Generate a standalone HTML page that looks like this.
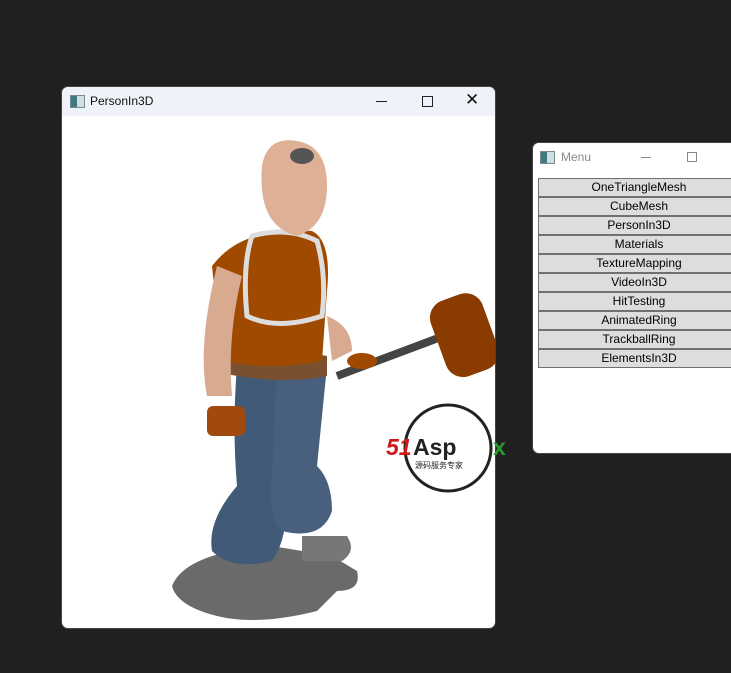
<!DOCTYPE html>
<html><head><style>
body{margin:0;width:731px;height:673px;background:#202020;position:relative;overflow:hidden;font-family:"Segoe UI","Liberation Sans","Noto Sans CJK SC",sans-serif}
.win{position:absolute;background:#fff;border-radius:7px;overflow:hidden;border:1px solid #444}
.tb{height:29px;background:#eff2f8;position:relative;font-size:12px;color:#111}
.ic{position:absolute;left:8px;top:8px;width:13px;height:11px;border:1px solid #7a8a90;background:linear-gradient(90deg,#3c7a80 0 45%,#cfe0e0 45%)}
.btn{position:absolute;left:5px;width:200px;height:17px;background:#ddd;border:1px solid #707070;font-size:12px;text-align:center;line-height:17px;color:#000}
</style></head><body>
<div class="win" style="left:61px;top:86px;width:433px;height:541px">
<div class="tb"><div class="ic"></div><span style="position:absolute;left:28px;top:7px">PersonIn3D</span>
<span style="position:absolute;left:314px;top:14px;width:11px;border-top:1px solid #222"></span>
<span style="position:absolute;left:360px;top:9px;width:9px;height:9px;border:1px solid #222"></span>
<span style="position:absolute;left:403px;top:3px;font-size:17px">✕</span></div>
<svg width="433" height="512" style="position:absolute;left:0;top:29px">
<path d="M110 470 q10 -25 60 -35 l40 -5 l60 10 l25 15 q5 20 -20 20 l-20 20 q-60 15 -100 5 q-40 -10 -45 -30z" fill="#6a6a6a"/>
<path d="M240 420 l45 0 q10 15 -5 25 l-40 0z" fill="#777"/>
<path d="M175 250 q-5 60 0 120 q-30 35 -25 65 q20 20 60 10 q20 -30 10 -70 l5 -120z" fill="#405a78"/>
<path d="M215 250 l-5 110 q-5 40 10 55 q40 10 50 -20 q0 -30 -15 -45 l10 -100z" fill="#48607e"/>
<path d="M150 240 q40 -15 115 0 l0 20 q-50 10 -115 -5z" fill="#7a5030"/>
<path d="M150 150 q30 -40 100 -35 q20 10 15 60 l-5 70 q-50 10 -100 0 z" fill="#a04a00"/>
<path d="M190 120 q-10 30 -5 80 q30 15 75 0 q5 -40 -5 -75 q-30 -15 -65 -5z" fill="none" stroke="#ddd" stroke-width="5"/>
<path d="M155 150 q-20 80 -10 130 l25 0 q-5 -60 10 -120z" fill="#d8aa90"/>
<path d="M265 200 q25 10 25 35 l-20 10z" fill="#d8aa90"/>
<rect x="145" y="290" width="38" height="30" rx="6" fill="#a04a10"/>
<path d="M200 50 q5 -30 35 -25 q30 5 30 45 q0 40 -30 50 q-40 -10 -35 -70z" fill="#deb096"/>
<ellipse cx="240" cy="40" rx="12" ry="8" fill="#555"/>
<path d="M275 260 l120 -45" stroke="#444" stroke-width="8"/>
<rect x="375" y="180" width="55" height="80" rx="18" fill="#8a3c00" transform="rotate(-20 400 220)"/>
<ellipse cx="300" cy="245" rx="15" ry="8" fill="#a04a00"/>
</svg></div>
<svg width="140" height="100" style="position:absolute;left:380px;top:400px">
<circle cx="68" cy="48" r="43" fill="#fff" stroke="#222" stroke-width="3"/>
<text x="6" y="55" font-size="23" font-weight="bold" font-style="italic" fill="#d01818" font-family="Liberation Sans">51</text>
<text x="33" y="55" font-size="23" font-weight="bold" fill="#222" font-family="Liberation Sans">Asp</text>
<text x="113" y="55" font-size="23" font-weight="bold" fill="#2a9a2a" font-family="Liberation Sans">x</text>
<text x="35" y="68" font-size="8" fill="#222">源码服务专家</text>
</svg>
<div class="win" style="left:532px;top:142px;width:210px;height:310px">
<div class="tb" style="height:28px;background:#fff;color:#888"><div class="ic" style="left:7px"></div><span style="position:absolute;left:28px;top:7px">Menu</span>
<span style="position:absolute;left:108px;top:14px;width:10px;border-top:1px solid #888"></span>
<span style="position:absolute;left:154px;top:9px;width:8px;height:8px;border:1px solid #888"></span></div>
<div class="btn" style="top:35px">OneTriangleMesh</div>
<div class="btn" style="top:54px">CubeMesh</div>
<div class="btn" style="top:73px">PersonIn3D</div>
<div class="btn" style="top:92px">Materials</div>
<div class="btn" style="top:111px">TextureMapping</div>
<div class="btn" style="top:130px">VideoIn3D</div>
<div class="btn" style="top:149px">HitTesting</div>
<div class="btn" style="top:168px">AnimatedRing</div>
<div class="btn" style="top:187px">TrackballRing</div>
<div class="btn" style="top:206px">ElementsIn3D</div>
</div>
</body></html>
